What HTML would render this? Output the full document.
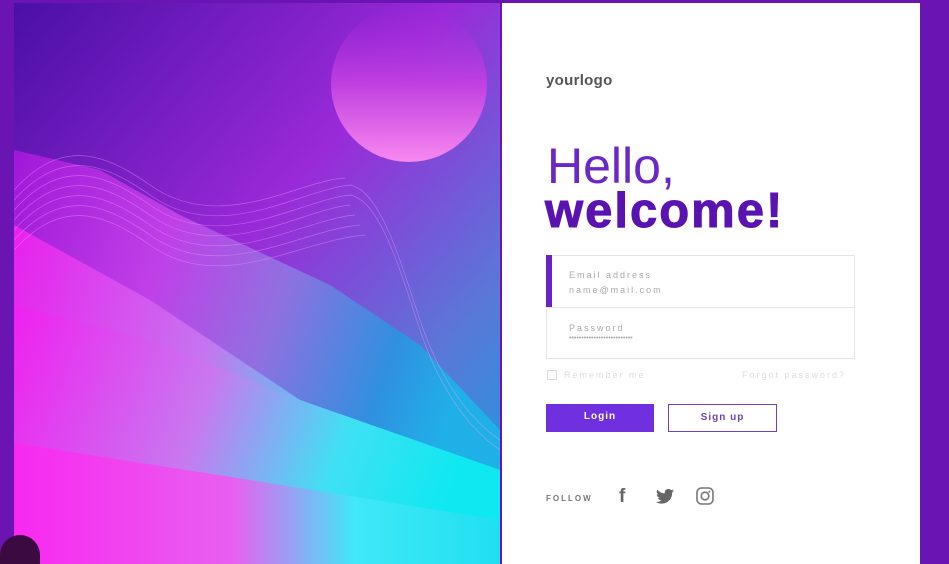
<!DOCTYPE html>
<html><head><meta charset="utf-8"><style>
*{margin:0;padding:0;box-sizing:border-box}
html,body{width:949px;height:564px;overflow:hidden}
body{background:#6a14b4;position:relative;font-family:"Liberation Sans",sans-serif}
#art{position:absolute;left:14px;top:3px}
#panel{position:absolute;left:502px;top:3px;width:418px;height:561px;background:#fff}
.abs{position:absolute}
.logo{left:44px;top:69px;font-weight:bold;font-size:15px;color:#555;letter-spacing:.3px}
.hello{left:45px;top:134px;font-size:50px;color:#6a28c8;font-weight:normal;letter-spacing:0}
.wel{left:43px;top:180px;font-size:49px;color:#5a12b0;font-weight:900;letter-spacing:2px;-webkit-text-stroke:1px #5a12b0}
.box{left:44px;top:252px;width:309px;height:104px;border:1px solid #e4e4ec}
.div{left:0;top:51px;width:307px;height:1px;background:#e4e4ec}
.bar{left:-1px;top:-1px;width:6px;height:52px;background:#6a22c4}
.lab{font-size:9px;color:#aaa;letter-spacing:2px}
.btn{top:401px;height:28px;font-size:10px;font-weight:bold;letter-spacing:1px;text-align:center;line-height:26px}
</style></head><body>
<svg id="art" width="486" height="561" viewBox="14 3 486 561">
<defs>
<linearGradient id="bg" x1="0" y1="0" x2="1" y2="1"><stop offset="0" stop-color="#4a0fa6"/><stop offset=".45" stop-color="#9a2ad8"/><stop offset=".75" stop-color="#5a78d8"/><stop offset="1" stop-color="#10a0e0"/></linearGradient>
<linearGradient id="ga" x1="0" y1="0" x2="1" y2="0.3"><stop offset="0" stop-color="#a018d8"/><stop offset=".35" stop-color="#c040e8"/><stop offset=".6" stop-color="#9070e0"/><stop offset=".85" stop-color="#3090e0"/><stop offset="1" stop-color="#20b0e8"/></linearGradient>
<linearGradient id="gb" x1="0" y1="0" x2="1" y2="0.2"><stop offset="0" stop-color="#f020f0"/><stop offset=".45" stop-color="#c878f0"/><stop offset=".75" stop-color="#40e0f4"/><stop offset="1" stop-color="#10e8f0"/></linearGradient>
<linearGradient id="gc" x1="0" y1="0" x2="1" y2="0"><stop offset="0" stop-color="#f828f0"/><stop offset=".45" stop-color="#e860f0"/><stop offset=".7" stop-color="#40e8f8"/><stop offset="1" stop-color="#20e0f0"/></linearGradient>
<linearGradient id="moon" x1="0" y1="0" x2="0" y2="1"><stop offset="0" stop-color="#a828e0" stop-opacity="0"/><stop offset=".5" stop-color="#c040e0"/><stop offset="1" stop-color="#f888f0"/></linearGradient>
</defs>
<rect x="14" y="3" width="486" height="561" fill="url(#bg)"/>
<circle cx="409" cy="84" r="78" fill="url(#moon)"/>
<polygon points="14,150 100,170 180,215 330,285 420,345 500,430 500,564 14,564" fill="url(#ga)"/>
<polygon points="14,225 150,300 300,400 500,470 500,564 14,564" fill="url(#gb)" opacity=".9"/>
<polygon points="14,305 150,340 300,400 500,470 500,564 14,564" fill="url(#gb)"/>
<polygon points="14,443 250,480 500,520 500,564 14,564" fill="url(#gc)"/>
<g fill="none" stroke="#f0a0ff" stroke-opacity=".45" stroke-width=".7">
<path d="M14,200 C60,150 100,160 150,195 C220,245 300,190 350,185 C380,190 400,260 420,320 C440,380 470,420 500,440"/>
<path d="M14,210 C60,160 100,170 150,205 C220,255 300,200 350,195 C380,200 400,270 420,330 C440,390 470,430 500,450"/>
<path d="M14,220 C60,170 100,180 150,215 C220,265 300,210 350,205"/>
<path d="M14,230 C60,180 100,190 150,225 C220,275 300,220 355,215"/>
<path d="M14,240 C60,190 100,200 150,235 C220,285 300,230 360,225"/>
<path d="M14,250 C60,200 100,210 150,245 C220,295 300,240 365,235"/>
<path d="M14,190 C60,140 100,150 150,185 C220,235 300,180 345,178"/>
</g>
</svg>
<div id="panel">
<div class="abs logo">yourlogo</div>
<div class="abs hello">Hello,</div>
<div class="abs wel">welcome!</div>
<div class="abs box">
<div class="abs bar"></div>
<div class="abs lab" style="left:22px;top:14px">Email address</div>
<div class="abs lab" style="left:22px;top:29px">name@mail.com</div>
<div class="abs div"></div>
<div class="abs lab" style="left:22px;top:67px">Password</div>
<div class="abs lab" style="left:22px;top:79px;font-size:7px;letter-spacing:0">••••••••••••••••••••••••••</div>
</div>
<div class="abs" style="left:45px;top:367px;width:10px;height:10px;border:1px solid #ddd"></div>
<div class="abs lab" style="left:62px;top:367px;color:#ddd">Remember me</div>
<div class="abs lab" style="left:240px;top:367px;color:#ddd">Forgot password?</div>
<div class="abs btn" style="left:44px;width:108px;background:#7030e0;color:#fff">Login</div>
<div class="abs btn" style="left:166px;width:109px;border:1.5px solid #7040c0;color:#7040c0">Sign up</div>
<div class="abs" style="left:44px;top:491px;font-size:8px;letter-spacing:2px;color:#777;font-weight:bold">FOLLOW</div>
<div class="abs" style="left:117px;top:483px;font-size:19px;font-weight:bold;color:#666">f</div>
<svg class="abs" style="left:154px;top:486px" width="18" height="15" viewBox="0 0 24 20"><path fill="#666" d="M24 2.4a10 10 0 0 1-2.8.8A5 5 0 0 0 23.3.4a10 10 0 0 1-3.1 1.2A4.9 4.9 0 0 0 11.8 6 14 14 0 0 1 1.7.9a4.9 4.9 0 0 0 1.5 6.6A5 5 0 0 1 1 6.9a4.9 4.9 0 0 0 3.9 4.8 5 5 0 0 1-2.2.1 4.9 4.9 0 0 0 4.6 3.4A9.9 9.9 0 0 1 0 17.3 14 14 0 0 0 7.5 19.5c9 0 14-7.5 14-14v-.6A10 10 0 0 0 24 2.4z"/></svg>
<svg class="abs" style="left:194px;top:484px" width="18" height="18" viewBox="0 0 18 18"><rect x="1" y="1" width="16" height="16" rx="4.5" fill="none" stroke="#777" stroke-width="1.6"/><circle cx="9" cy="9" r="3.8" fill="none" stroke="#777" stroke-width="1.6"/><circle cx="13.4" cy="4.6" r="1" fill="#777"/></svg>
</div>
<div class="abs" style="left:0;top:535px;width:40px;height:29px;border-radius:20px 20px 0 0;background:#3a0a40;clip-path:inset(0 0 0 0)"></div>
</body></html>
